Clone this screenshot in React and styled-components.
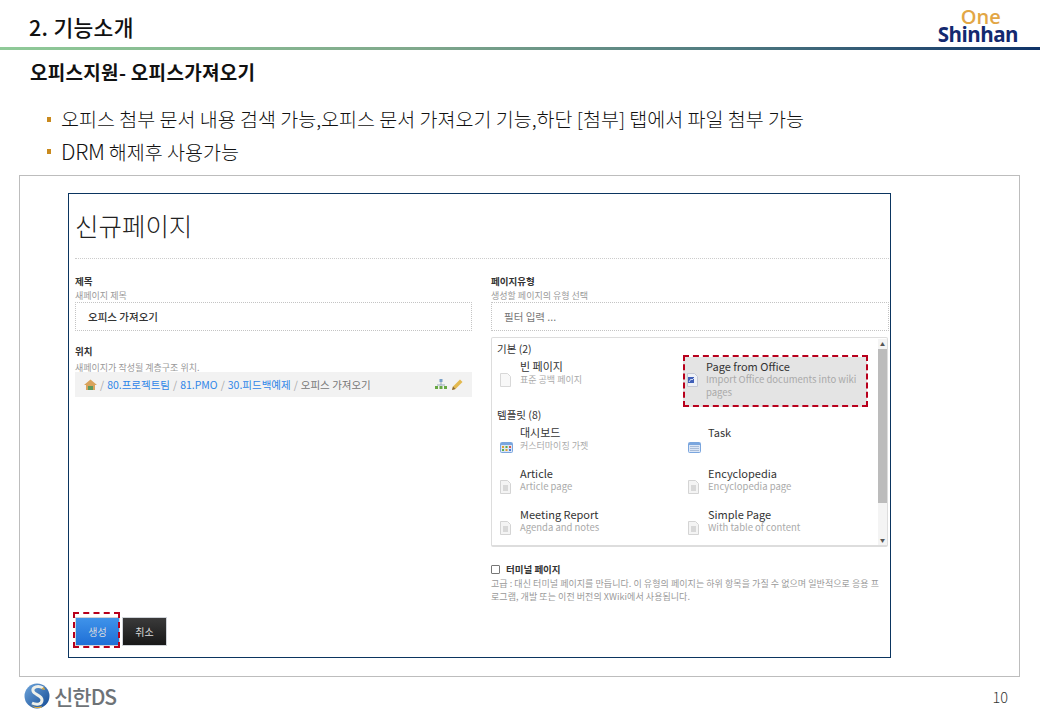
import React from "react";
import styled, { createGlobalStyle } from "styled-components";

const KR = `"Noto Sans CJK KR", "Noto Sans", sans-serif`;

const Global = createGlobalStyle`
  html, body { margin: 0; padding: 0; background: #fff; }
  body { font-family: ${KR}; }
`;

const Page = styled.div`
  width: 1040px;
  height: 720px;
  position: relative;
  overflow: hidden;
  background: #fff;
  color: #111;
`;

const Header = styled.header`
  height: 47px;
  padding: 0 22px 0 29px;
  display: flex;
  justify-content: space-between;
  align-items: flex-end;
`;

const Title = styled.h1`
  margin: 0 0 6px;
  font-size: 21.5px;
  line-height: 28px;
  font-weight: 500;
  letter-spacing: 0.3px;
`;

const Brand = styled.div`
  display: flex;
  flex-direction: column;
  align-items: center;
  font-family: "Open Sans", sans-serif;
  margin-bottom: 4px;
`;

const BrandTop = styled.span`
  font-size: 20px;
  line-height: 16px;
  color: #e2a645;
  font-weight: 600;
  margin-left: 6px;
`;

const BrandBottom = styled.span`
  font-size: 20.5px;
  line-height: 18px;
  color: #13296f;
  font-weight: 700;
  letter-spacing: -0.5px;
`;

const Rule = styled.div`
  height: 3px;
  background: linear-gradient(90deg, #8fca98 0%, #80a98c 40%, #4f7a80 70%, #0f3368 100%);
`;

const SubTitle = styled.h2`
  margin: 10px 0 0 30px;
  font-size: 19px;
  line-height: 24px;
  font-weight: 700;
  letter-spacing: 0.3px;
`;

const Bullets = styled.ul`
  list-style: none;
  margin: 20px 0 0 47px;
  padding: 0;
  display: flex;
  flex-direction: column;
  gap: 4px;
`;

const Bullet = styled.li`
  display: flex;
  align-items: center;
  gap: 10px;
  height: 28px;
  font-size: 19.55px;
  font-weight: 300;
  white-space: nowrap;
  &::before {
    content: "";
    width: 4px;
    height: 5px;
    background: #c98a1e;
    margin-top: 2px;
  }
`;

const Acronym = styled.span`
  font-size: 21.5px;
  letter-spacing: -0.3px;
`;

const Frame = styled.section`
  box-sizing: border-box;
  width: 1001px;
  height: 502px;
  margin: 11px 0 0 19px;
  border: 1px solid #bdbdbd;
  padding: 17px 0 0 48px;
`;

const Shot = styled.div`
  box-sizing: border-box;
  width: 823px;
  height: 465px;
  border: 1px solid #0b3560;
  padding: 0 1px 0 6px;
  position: relative;
`;

const Heading = styled.div`
  height: 65px;
  box-sizing: border-box;
  border-bottom: 1px dotted #ccc;
  font-size: 25.5px;
  line-height: 61px;
  font-weight: 300;
  color: #222;
`;

const Columns = styled.div`
  display: grid;
  grid-template-columns: 397px 398px;
  column-gap: 19px;
  padding-top: 15px;
`;

const Col = styled.div`
  display: flex;
  flex-direction: column;
`;

const Label = styled.div`
  font-size: 9.5px;
  line-height: 14px;
  font-weight: 700;
  color: #333;
`;

const Hint = styled.div`
  font-size: 9px;
  line-height: 13px;
  margin-top: 1px;
  color: #999;
`;

const LowHint = styled(Hint)`
  margin-top: 3px;
  margin-bottom: -2px;
`;

const Field = styled.div`
  box-sizing: border-box;
  height: 29px;
  border: 1px dotted #c4c4c4;
  border-radius: 1px;
  padding-left: 12px;
  font-size: 10.5px;
  font-weight: ${(p) => (p.$muted ? 400 : 500)};
  line-height: 27px;
  color: ${(p) => (p.$muted ? "#777" : "#333")};
`;

const Location = styled(Label)`
  margin-top: 13px;
`;

const Crumbs = styled.div`
  height: 25px;
  background: #f2f2f2;
  display: flex;
  align-items: center;
  padding: 0 9px 0 9px;
  font-size: 10.5px;
  color: #aaa;
  white-space: nowrap;
  gap: 3px;
`;

const Crumb = styled.span`
  color: ${(p) => (p.$current ? "#777" : "#2f86e8")};
  font-size: 10.5px;
`;

const CrumbTools = styled.span`
  margin-left: auto;
  display: flex;
  gap: 5px;
`;

const TypeBox = styled.div`
  box-sizing: border-box;
  margin-top: 6px;
  height: 210px;
  width: 397px;
  border: 1px solid #ddd;
  border-bottom-width: 2px;
  border-radius: 2px;
  position: relative;
  padding: 3px 0 0 5px;
`;

const Group = styled.div`
  font-size: 10.5px;
  line-height: 16px;
  color: #333;
  font-weight: 400;
  margin-top: ${(p) => p.$gap || 0}px;
`;

const TypeGrid = styled.div`
  display: grid;
  grid-template-columns: 188px 188px;
  grid-auto-rows: ${(p) => p.$row}px;
`;

const Item = styled.div`
  display: flex;
  gap: 7px;
  padding-left: 3px;
  padding-top: 3px;
  box-sizing: border-box;
`;

const ItemIcon = styled.div`
  width: 13px;
  padding-top: 8px;
  flex: none;
`;

const ItemName = styled.div`
  font-size: 11px;
  line-height: 13px;
  color: #333;
`;

const ItemDesc = styled.div`
  font-size: ${(p) => (p.$ko ? 9 : 9.5)}px;
  line-height: 13px;
  color: #aaa;
  width: 155px;
`;

const Selected = styled(Item)`
  background: #e4e4e4;
  width: 184px;
  height: 50px;
  padding-left: 4px;
  margin-left: -2px;
  gap: 6px;
`;

const Track = styled.div`
  position: absolute;
  right: 0;
  top: 1px;
  bottom: 0;
  width: 9px;
  background: #f4f4f4;
  display: flex;
  flex-direction: column;
  align-items: center;
  justify-content: space-between;
  color: #555;
  font-size: 5px;
  line-height: 10px;
`;

const Thumb = styled.div`
  position: absolute;
  top: 10px;
  left: 0;
  width: 9px;
  height: 154px;
  background: #bcbcbc;
`;

const Check = styled.label`
  display: flex;
  align-items: center;
  gap: 6px;
  margin-top: 15px;
  font-size: 9.5px;
  line-height: 14px;
  font-weight: 700;
  color: #333;
`;

const Box = styled.span`
  width: 7px;
  height: 7px;
  border: 1px solid #777;
  border-radius: 1px;
  margin-top: 1px;
`;

const Advice = styled.p`
  margin: 1px 0 0;
  font-size: 9px;
  line-height: 13px;
  letter-spacing: 0.05px;
  color: #999;
  width: 394px;
`;

const Buttons = styled.div`
  position: absolute;
  left: 6px;
  top: 423px;
  display: flex;
  gap: 2px;
`;

const Btn = styled.div`
  width: 45px;
  height: 29px;
  box-sizing: border-box;
  border: 1px solid #cfd3d8;
  background: ${(p) =>
    p.$primary
      ? "linear-gradient(#3f93ea, #1f6fd6)"
      : "linear-gradient(#3a3a3a, #181818)"};
  color: #ddd;
  font-size: 10px;
  display: flex;
  align-items: center;
  justify-content: center;
`;

const Dashed = styled.div`
  position: absolute;
  box-sizing: border-box;
  border: 2px dashed #b8001c;
  left: ${(p) => p.$x}px;
  top: ${(p) => p.$y}px;
  width: ${(p) => p.$w}px;
  height: ${(p) => p.$h}px;
`;

const Footer = styled.footer`
  display: flex;
  justify-content: space-between;
  align-items: center;
  padding: 6px 32px 0 24px;
`;

const DsLogo = styled.div`
  display: flex;
  align-items: center;
  gap: 4px;
  font-size: 21px;
  line-height: 26px;
  font-weight: 500;
  color: #6e7377;
  letter-spacing: -1px;
`;

const PageNo = styled.span`
  font-size: 14.5px;
  font-weight: 300;
  color: #333;
`;

const Doc = () => (
  <svg width="11" height="14" viewBox="0 0 11 14">
    <path d="M.5.5h7l3 3v10H.5z" fill="#f4f4f4" stroke="#d4d4d4" />
    <path d="M3 5h5v6H3z" fill="#d8d8d8" />
  </svg>
);

const BlankDoc = () => (
  <svg width="11" height="14" viewBox="0 0 11 14">
    <path d="M.5.5h7l3 3v10H.5z" fill="#f8f8f8" stroke="#d8d8d8" />
  </svg>
);

const OfficeDoc = () => (
  <svg width="11" height="14" viewBox="0 0 11 14">
    <path d="M.5.5h7l3 3v10H.5z" fill="#eef1f7" stroke="#c4c8d4" />
    <path d="M1 4h6v6H1z" fill="#3f5fb8" />
    <path d="M2 9l2-3 1 1 2-2" stroke="#cdd8f4" fill="none" />
  </svg>
);

const Table = ({ colored }) => (
  <svg width="13" height="11" viewBox="0 0 13 11">
    <rect x=".5" y=".5" width="12" height="10" rx="1" fill="#dbe6f6" stroke="#7aa6de" />
    <path d="M1 1h11v2H1z" fill="#7aa6de" />
    {colored ? (
      <>
        <path d="M2 4h2v2H2z" fill="#e0a030" />
        <path d="M5.500 4h2v2h-2z" fill="#5cac4c" />
        <path d="M9 4h2v2H9z" fill="#d85c4c" />
        <path d="M2 7h2v2H2z" fill="#5cac4c" />
        <path d="M5.500 7h2v2h-2z" fill="#e0a030" />
        <path d="M9 7h2v2H9z" fill="#4c7cd8" />
      </>
    ) : (
      <path d="M2 4.500h9M2 6.500h9M2 8.500h9" stroke="#a8bcd8" />
    )}
  </svg>
);

const Home = () => (
  <svg width="13" height="11" viewBox="0 0 13 11">
    <path d="M6.500.5L0 6h2v5h9V6h2z" fill="#d9a35c" />
    <path d="M4 7h5v4H4z" fill="#5e9a5e" />
  </svg>
);

const Tree = () => (
  <svg width="12" height="11" viewBox="0 0 12 11">
    <path d="M4.500 0h3v3h-3z" fill="#7aa0c8" />
    <path d="M6 3v3M2 6h8" stroke="#9ab" />
    <path d="M0 7h3v3H0zM4.500 7h3v3h-3zM9 7h3v3H9z" fill="#67a844" />
  </svg>
);

const Pencil = () => (
  <svg width="11" height="11" viewBox="0 0 11 11">
    <path d="M0 11l1-3.500L8 .5 10.500 3l-7 7z" fill="#e3b94f" />
    <path d="M0 11l1-3.500L3.500 10z" fill="#8a6a3a" />
  </svg>
);

const Emblem = () => (
  <svg width="26" height="26" viewBox="0 0 26 26">
    <defs>
      <linearGradient id="emblem" x1="0" y1="0" x2="1" y2="1">
        <stop offset="0" stopColor="#6fa6dc" />
        <stop offset="1" stopColor="#134a94" />
      </linearGradient>
    </defs>
    <circle cx="13" cy="13" r="12.500" fill="url(#emblem)" />
    <path
      d="M19 5c-5-3-11-1-10 3s9 4 9 9-6 5-10 3"
      fill="none"
      stroke="#eef0ea"
      strokeWidth="3"
    />
    <path d="M7 22c3 2 7 3 11 1l-1 2h-6z" fill="#d9a93f" />
    <path d="M17 6l3-2 1 3z" fill="#d9a93f" />
  </svg>
);

const TYPES = [
  { name: "대시보드", desc: "커스터마이징 가젯", icon: <Table colored />, ko: true },
  { name: "Task", desc: "", icon: <Table /> },
  { name: "Article", desc: "Article page", icon: <Doc /> },
  { name: "Encyclopedia", desc: "Encyclopedia page", icon: <Doc /> },
  { name: "Meeting Report", desc: "Agenda and notes", icon: <Doc /> },
  { name: "Simple Page", desc: "With table of content", icon: <Doc /> },
];

const App = () => (
  <Page>
    <Global />
    <Header>
      <Title>2. 기능소개</Title>
      <Brand>
        <BrandTop>One</BrandTop>
        <BrandBottom>Shinhan</BrandBottom>
      </Brand>
    </Header>
    <Rule />
    <SubTitle>오피스지원- 오피스가져오기</SubTitle>
    <Bullets>
      <Bullet>오피스 첨부 문서 내용 검색 가능,오피스 문서 가져오기 기능,하단 [첨부] 탭에서 파일 첨부 가능</Bullet>
      <Bullet><span><Acronym>DRM</Acronym> 해제후 사용가능</span></Bullet>
    </Bullets>
    <Frame>
      <Shot>
        <Heading>신규페이지</Heading>
        <Columns>
          <Col>
            <Label>제목</Label>
            <Hint>새페이지 제목</Hint>
            <Field>오피스 가져오기</Field>
            <Location>위치</Location>
            <LowHint>새페이지가 작성될 계층구조 위치.</LowHint>
            <Crumbs>
              <Home /> /
              <Crumb>80.프로젝트팀</Crumb> /
              <Crumb>81.PMO</Crumb> /
              <Crumb>30.피드백예제</Crumb> /
              <Crumb $current>오피스 가져오기</Crumb>
              <CrumbTools>
                <Tree />
                <Pencil />
              </CrumbTools>
            </Crumbs>
          </Col>
          <Col>
            <Label>페이지유형</Label>
            <Hint>생성할 페이지의 유형 선택</Hint>
            <Field $muted>필터 입력 ...</Field>
            <TypeBox>
              <Group>기본 (2)</Group>
              <TypeGrid $row={49}>
                <Item>
                  <ItemIcon><BlankDoc /></ItemIcon>
                  <div>
                    <ItemName>빈 페이지</ItemName>
                    <ItemDesc $ko>표준 공백 페이지</ItemDesc>
                  </div>
                </Item>
                <Selected>
                  <ItemIcon><OfficeDoc /></ItemIcon>
                  <div>
                    <ItemName>Page from Office</ItemName>
                    <ItemDesc>Import Office documents into wiki pages</ItemDesc>
                  </div>
                </Selected>
              </TypeGrid>
              <Group $gap={1}>템플릿 (8)</Group>
              <TypeGrid $row={41}>
                {TYPES.map((t) => (
                  <Item key={t.name}>
                    <ItemIcon>{t.icon}</ItemIcon>
                    <div>
                      <ItemName>{t.name}</ItemName>
                      <ItemDesc $ko={t.ko}>{t.desc}</ItemDesc>
                    </div>
                  </Item>
                ))}
              </TypeGrid>
              <Track>
                <span>▲</span>
                <Thumb />
                <span>▼</span>
              </Track>
            </TypeBox>
            <Check>
              <Box />
              터미널 페이지
            </Check>
            <Advice>
              고급 : 대신 터미널 페이지를 만듭니다. 이 유형의 페이지는 하위 항목을 가질 수 없으며 일반적으로 응용 프로그램, 개발 또는 이전 버전의 XWiki에서 사용됩니다.
            </Advice>
          </Col>
        </Columns>
        <Buttons>
          <Btn $primary>생성</Btn>
          <Btn>취소</Btn>
        </Buttons>
        <Dashed $x={614} $y={161} $w={185} $h={52} />
        <Dashed $x={4} $y={418} $w={47} $h={36} />
      </Shot>
    </Frame>
    <Footer>
      <DsLogo>
        <Emblem />
        신한DS
      </DsLogo>
      <PageNo>10</PageNo>
    </Footer>
  </Page>
);

export default App;
